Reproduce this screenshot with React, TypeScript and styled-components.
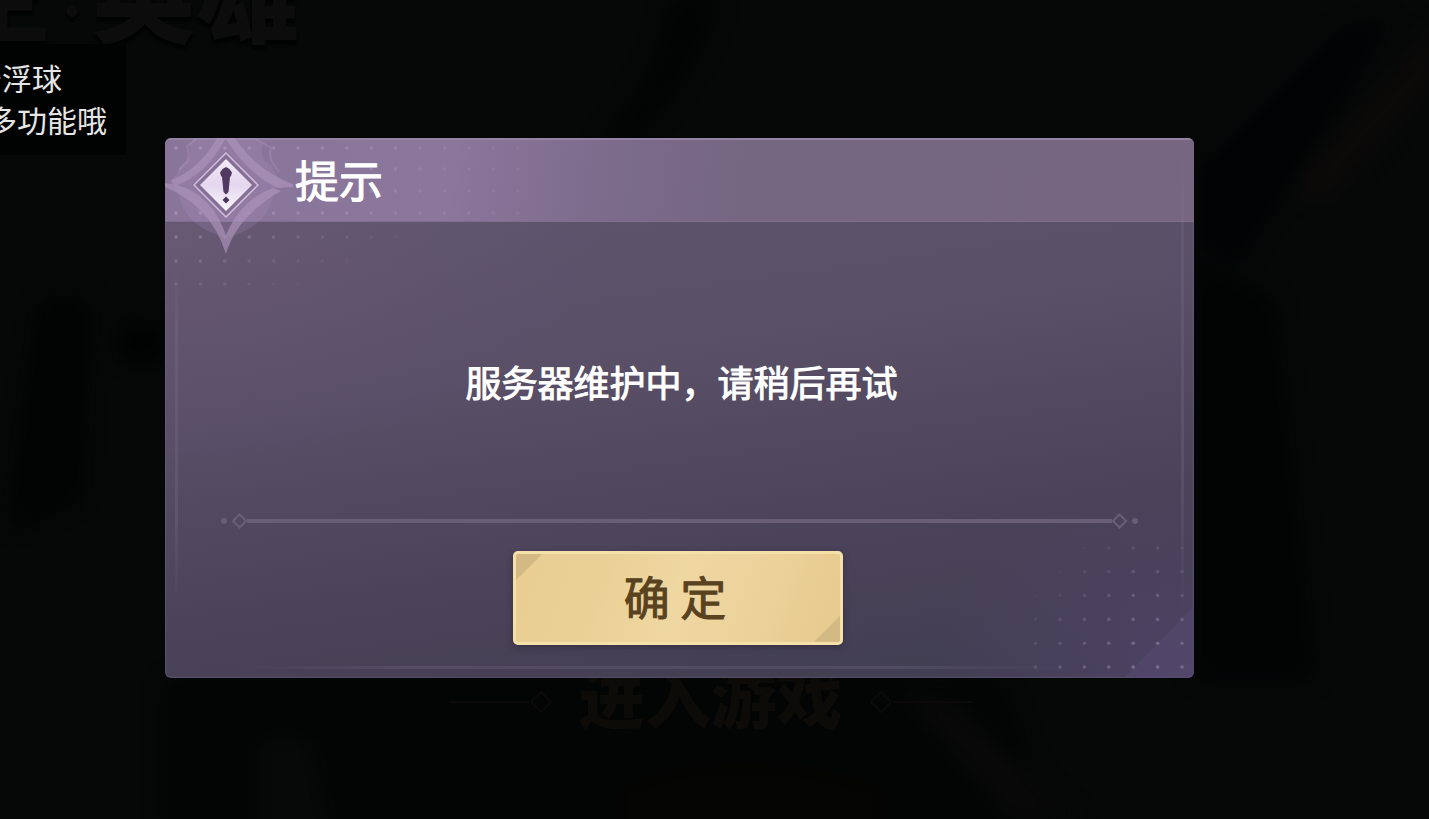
import React from "react";
import styled, { createGlobalStyle } from "styled-components";

const GlobalStyle = createGlobalStyle`
  *, *::before, *::after { box-sizing: border-box; }
  body {
    margin: 0;
    background: #040606;
    font-family: "Noto Sans CJK SC", "Noto Sans", sans-serif;
  }
`;

const Scene = styled.main`
  position: relative;
  min-height: 100vh;
  overflow: hidden;
  display: grid;
  align-items: start;
`;

const Backdrop = styled.div`
  position: absolute;
  inset: 0;
  display: flex;
  flex-direction: column;
  justify-content: space-between;
  overflow: hidden;
`;

const Scenery = styled.svg`
  position: absolute;
  inset: 0;
  width: 100%;
  height: 100%;
`;

const GameTitle = styled.h1`
  position: relative;
  display: flex;
  align-items: center;
  margin: -84px 0 0 -156px;
  font-size: 104px;
  line-height: 108px;
  font-weight: 900;
  white-space: nowrap;
  color: #0d0c0c;
  text-shadow: 0 4px 3px #010202;
`;

const TitleDot = styled.span`
  padding-top: 40px;
  font-size: 40px;
`;

const EnterRow = styled.div`
  position: relative;
  display: flex;
  align-items: center;
  justify-content: center;
  gap: 26px;
  padding: 0 8px 74px 0;
`;

const EnterText = styled.span`
  padding-bottom: 16px;
  font-size: 66px;
  line-height: 70px;
  font-weight: 900;
  color: #0c0b08;
`;

const Ornament = styled.svg<{ $flip?: boolean }>`
  width: 104px;
  height: 24px;
  transform: ${(p) => (p.$flip ? "scaleX(-1)" : "none")};
`;

const FloatTip = styled.aside`
  position: absolute;
  top: 44px;
  left: -122px;
  width: 248px;
  padding: 12px 0 15px;
  background: #010303;
  color: #e6e6e6;
  font-size: 30px;
  line-height: 42px;
  text-align: center;
  white-space: nowrap;
`;

const DialogLayer = styled.div`
  position: relative;
  padding: 138px 235px 40px 165px;
`;

const Dialog = styled.section`
  position: relative;
  display: flex;
  flex-direction: column;
  min-height: 540px;
  border-radius: 6px;
  overflow: hidden;
  background:
    radial-gradient(ellipse 440px 240px at 0 84px, rgba(122, 92, 130, 0.36), rgba(122, 92, 130, 0)),
    radial-gradient(ellipse 260px 190px at 100% 100%, rgba(88, 72, 118, 0.5), rgba(88, 72, 118, 0)),
    linear-gradient(172deg, #5d556c 16%, #594f67 42%, #4b4359 72%, #413e52 96%);
  box-shadow: inset 0 0 2px 1px rgba(160, 148, 180, 0.2);
`;

const DialogHeader = styled.header`
  display: flex;
  align-items: center;
  height: 84px;
  padding: 0 0 4px 130px;
  border-top: 2px solid #9583a3;
  border-bottom: 1px solid #7e708b;
  background: linear-gradient(98deg, #8a759a 0, #8b769c 28%, #7d6c8c 42%, #756682 56%, #766681 100%);
`;

const DialogTitle = styled.h2`
  position: relative;
  margin: 0;
  font-size: 44px;
  line-height: 60px;
  font-weight: 400;
  color: #fff;
  -webkit-text-stroke: 1px #fff;
  stroke-linejoin: round;
`;

const DialogBody = styled.div`
  position: relative;
  flex: 1;
  display: flex;
  flex-direction: column;
  align-items: center;
  padding: 26px 56px 33px;
`;

const Message = styled.p`
  flex: 1;
  display: flex;
  align-items: center;
  margin: 0;
  padding-left: 4px;
  font-size: 36px;
  line-height: 52px;
  font-weight: 400;
  color: #fff;
  -webkit-text-stroke: 1px #fff;
  stroke-linejoin: round;
`;

const Divider = styled.div`
  align-self: stretch;
  display: flex;
  align-items: center;
  height: 16px;
  margin-bottom: 22px;
`;

const DividerBar = styled.span`
  flex: 1;
  height: 4px;
  background: #685f76;
`;

const DividerEnd = styled.svg<{ $flip?: boolean }>`
  width: 26px;
  height: 16px;
  transform: ${(p) => (p.$flip ? "scaleX(-1)" : "none")};
`;

const ConfirmButton = styled.button`
  width: 330px;
  height: 94px;
  margin-right: 3px;
  padding: 0 6px 6px 0;
  border: 3px solid #f5e0a9;
  border-radius: 5px;
  background:
    linear-gradient(135deg, #d3b983 18px, transparent 19px),
    linear-gradient(315deg, #d3b983 18px, transparent 19px),
    linear-gradient(110deg, #e8ce92 0%, #e9d095 25%, #efd7a2 50%, #ecd199 75%, #e5c98c 100%);
  box-shadow: 0 2px 6px rgba(30, 24, 44, 0.4);
  color: #59421f;
  font-family: inherit;
  font-size: 46px;
  line-height: 80px;
  font-weight: 400;
  -webkit-text-stroke: 1px #59421f;
  stroke-linejoin: round;
  cursor: pointer;
`;

const CornerArt = styled.svg<{ $corner: "top" | "bottom" }>`
  position: absolute;
  ${(p) => (p.$corner === "top" ? "top: 0; left: 0;" : "right: 0; bottom: 0;")}
  pointer-events: none;
`;

const FrameLine = styled.span<{ $side: "left" | "right" | "bottom" }>`
  position: absolute;
  pointer-events: none;
  ${(p) =>
    p.$side === "bottom"
      ? `left: 70px; right: 130px; bottom: 9px; height: 3px;
         background: linear-gradient(90deg, transparent, rgba(130,120,150,.22) 20%, rgba(130,120,150,.22) 80%, transparent);`
      : `${p.$side}: 10px; top: ${p.$side === "left" ? "120px" : "12px"}; bottom: 70px; width: 3px;
         background: linear-gradient(transparent, rgba(140,125,155,.2) 20%, rgba(140,125,155,.2) 75%, transparent);`}
`;

const TOP_ROWS = [10, 31, 53, 75, 99, 123, 146];

function TopDots() {
  const dots: React.ReactNode[] = [];
  TOP_ROWS.forEach((y, row) => {
    for (let col = 0; col < 15; col++) {
      const inHeader = y < 84;
      const fade = inHeader
        ? 0.45 - col * 0.026
        : 0.34 - col * 0.032 - (row - 4) * 0.07;
      if (fade <= 0 || ((row === 1 || row === 2) && col < 8)) continue;
      dots.push(
        <circle key={`${row}-${col}`} cx={11 + col * 24.4} cy={y} r="1.8" fill="#c9afd6" opacity={fade} />
      );
    }
  });
  return <>{dots}</>;
}

function BottomDots() {
  const dots: React.ReactNode[] = [];
  for (let row = 0; row < 6; row++) {
    for (let col = 0; col < 7; col++) {
      const spread = Math.abs(col - 1.5) * 0.06 + row * 0.055;
      const fade = 0.48 - spread;
      if (fade <= 0.02) continue;
      dots.push(
        <circle
          key={`${row}-${col}`}
          cx={208 - col * 24.4}
          cy={169 - row * 23.8}
          r="1.8"
          fill="#b3a3c4"
          opacity={fade}
        />
      );
    }
  }
  return <>{dots}</>;
}

function Emblem() {
  return (
    <g>
      <path
        d="M31 0 L24 6 Q27 16 23 22 L15 28 Q13 36 4 44 L13 52 Q17 84 50 96 L61 100 L73 96 Q105 84 109 52 L118 44 Q109 36 107 28 L99 22 Q95 16 98 6 L91 0 Z"
        fill="#b79bc6"
        opacity="0.18"
      />
      <path
        d="M31 1 L22 8 Q25 18 22 24 L14 32 M91 1 L106 10 Q104 18 107 24 L114 34"
        fill="none"
        stroke="#b79cc6"
        strokeWidth="2"
        opacity="0.3"
      />
      <g fill="#ae94bb" opacity="0.66">
        <path d="M60 0 Q84 37 113 50 L128 49 L128 46 Q92 33 70 0 Z" />
        <path d="M61 0 Q41 37 10 48 L6 42 Q34 32 52 0 Z" />
        <path d="M0 45 L12 47 Q46 56 61 97 Q76 62 108 50 L116 53 Q72 78 61 116 Q46 68 0 49 Z" />
      </g>
      <path d="M61 13 L95 47 L61 81 L27 47 Z" fill="#856f96" />
      <path d="M61 15 L93 47 L61 79 L29 47 Z" fill="none" stroke="#cdbbd9" strokeWidth="1.6" />
      <path d="M61 21 L87 47 L61 73 L35 47 Z" fill="url(#gem)" />
      <path d="M61 29 L64.500 31 L67 34.500 L66 38 L65 39 L63.500 54 L61 56.500 L58.500 54 L57 39 L56 38 L55 34.500 L57.500 31 Z" fill="#513961" />
      <path d="M61 58.500 L64.500 62 L61 65.500 L57.500 62 Z" fill="#453657" />
    </g>
  );
}

export default function App() {
  return (
    <Scene>
      <GlobalStyle />
      <Backdrop aria-hidden="true">
        <Scenery viewBox="0 0 1429 819" preserveAspectRatio="none">
          <defs>
            <filter id="soft" filterUnits="userSpaceOnUse" x="-60" y="-60" width="1549" height="939" colorInterpolationFilters="sRGB">
              <feGaussianBlur stdDeviation="10" />
            </filter>
          </defs>
          <rect width="1429" height="819" fill="#050807" />
          <g filter="url(#soft)">
            <path d="M670 0 L720 0 Q690 90 630 140 L600 140 Q660 80 670 0Z" fill="#020404" />
            <path d="M1440 20 L1440 75 L1325 205 L1290 190 Z" fill="#0c0909" />
            <path d="M1340 30 L1390 20 L1240 260 L1200 250 L1200 170 Z" fill="#010304" />
            <path d="M1194 260 L1275 300 L1300 530 L1315 680 L1194 680 Z" fill="#020404" />
            <path d="M40 300 L90 300 L80 500 L10 530 Z" fill="#020303" />
            <path d="M120 325 H165 V360 H120Z" fill="#010202" />
            <path d="M165 680 H1000 L1060 840 H165Z" fill="#030404" />
            <path d="M260 740 L310 740 L330 840 L260 840Z" fill="#070808" />
            <path d="M900 690 L950 700 L1080 819 L1010 819Z" fill="#080808" />
            <path d="M620 790 Q740 740 880 790 L880 840 L620 840Z" fill="#050503" />
          </g>
        </Scenery>
        <GameTitle>
          时空<TitleDot>·</TitleDot>英雄
        </GameTitle>
        <EnterRow>
          <Ornament viewBox="0 0 104 24">
            <path d="M0 12 H80 M82 12 L92 2 L102 12 L92 22 Z" fill="none" stroke="#0b0a08" strokeWidth="2" />
          </Ornament>
          <EnterText>进入游戏</EnterText>
          <Ornament viewBox="0 0 104 24" $flip>
            <path d="M0 12 H80 M82 12 L92 2 L102 12 L92 22 Z" fill="none" stroke="#0b0a08" strokeWidth="2" />
          </Ornament>
        </EnterRow>
      </Backdrop>

      <FloatTip>
        点击浮球
        <br />
        查看更多功能哦
      </FloatTip>

      <DialogLayer>
        <Dialog role="alertdialog" aria-labelledby="notice-title" aria-describedby="notice-text">
          <DialogHeader>
            <DialogTitle id="notice-title">提示</DialogTitle>
          </DialogHeader>
          <CornerArt $corner="top" width="380" height="170" viewBox="0 0 380 170" aria-hidden="true">
            <defs>
              <linearGradient id="gem" x1="0" y1="0" x2="0" y2="1">
                <stop offset="0" stopColor="#f3eaf8" />
                <stop offset="0.5" stopColor="#e4d6ee" />
                <stop offset="1" stopColor="#fbf7fd" />
              </linearGradient>
            </defs>
            <TopDots />
            <Emblem />
          </CornerArt>
          <CornerArt $corner="bottom" width="220" height="180" viewBox="0 0 220 180" aria-hidden="true">
            <path d="M150 180 L220 108 V180 Z" fill="#54486c" opacity="0.7" />
            <BottomDots />
          </CornerArt>
          <FrameLine $side="left" />
          <FrameLine $side="right" />
          <FrameLine $side="bottom" />
          <DialogBody>
            <Message id="notice-text">服务器维护中，请稍后再试</Message>
            <Divider role="separator">
              <DividerEnd viewBox="0 0 26 16" aria-hidden="true">
                <circle cx="3" cy="8" r="3" fill="#685f76" />
                <path d="M12 8 L18.500 1.500 L25 8 L18.500 14.500 Z" fill="none" stroke="#685f76" strokeWidth="2" />
              </DividerEnd>
              <DividerBar />
              <DividerEnd viewBox="0 0 26 16" $flip aria-hidden="true">
                <circle cx="3" cy="8" r="3" fill="#685f76" />
                <path d="M12 8 L18.500 1.500 L25 8 L18.500 14.500 Z" fill="none" stroke="#685f76" strokeWidth="2" />
              </DividerEnd>
            </Divider>
            <ConfirmButton type="button">确 定</ConfirmButton>
          </DialogBody>
        </Dialog>
      </DialogLayer>
    </Scene>
  );
}
